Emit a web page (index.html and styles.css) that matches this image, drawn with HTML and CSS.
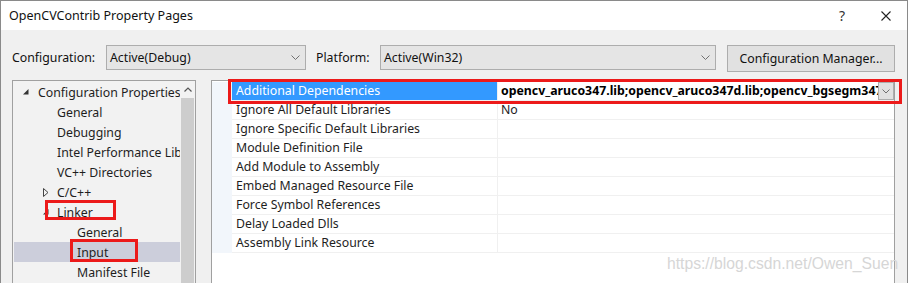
FILE: index.html
```html
<!DOCTYPE html>
<html lang="en">
<head>
    <meta charset="UTF-8">
    <title>OpenCVContrib Property Pages</title>
    <link rel="stylesheet" href="styles.css">
</head>
<body>
    <div class="window">
        <div class="titlebar">
            <span class="title">OpenCVContrib Property Pages</span>
            <span class="help">?</span>
            <svg class="close" width="10" height="10" viewBox="0 0 10 10">
                <path d="M0.5 0.5 L9.5 9.5 M9.5 0.5 L0.5 9.5" stroke="#222" stroke-width="1.1" fill="none"/>
            </svg>
        </div>

        <div class="toolbar">
            <label class="tb-label label-config">Configuration:</label>
            <div class="combo combo-config">
                <span>Active(Debug)</span>
                <svg width="9" height="5" viewBox="0 0 9 5"><path d="M0.5 0.5 L4.5 4.5 L8.5 0.5" stroke="#707070" fill="none"/></svg>
            </div>
            <label class="tb-label label-platform">Platform:</label>
            <div class="combo combo-platform">
                <span>Active(Win32)</span>
                <svg width="9" height="5" viewBox="0 0 9 5"><path d="M0.5 0.5 L4.5 4.5 L8.5 0.5" stroke="#707070" fill="none"/></svg>
            </div>
            <button class="btn">Configuration Manager...</button>
        </div>

        <div class="main">
            <div class="tree">
                <ul class="tree-list">
                    <li class="node lvl0">
                        <span class="tog"><svg width="6" height="6" viewBox="0 0 6 6"><path d="M5.5 0 L5.5 5.5 L0 5.5 Z" fill="#333"/></svg></span>
                        <span class="text">Configuration Properties</span>
                    </li>
                    <li class="node lvl1"><span class="tog"></span><span class="text">General</span></li>
                    <li class="node lvl1"><span class="tog"></span><span class="text">Debugging</span></li>
                    <li class="node lvl1"><span class="tog"></span><span class="text">Intel Performance Libraries</span></li>
                    <li class="node lvl1"><span class="tog"></span><span class="text">VC++ Directories</span></li>
                    <li class="node lvl1">
                        <span class="tog"><svg width="6" height="9" viewBox="0 0 6 9"><path d="M0.5 0.5 L5 4.5 L0.5 8.5 Z" fill="none" stroke="#444"/></svg></span>
                        <span class="text">C/C++</span>
                    </li>
                    <li class="node lvl1">
                        <span class="tog"><svg width="6" height="6" viewBox="0 0 6 6"><path d="M5.5 0 L5.5 5.5 L0 5.5 Z" fill="#333"/></svg></span>
                        <span class="text">Linker</span>
                    </li>
                    <li class="node lvl2"><span class="text">General</span></li>
                    <li class="node lvl2 selected"><span class="text">Input</span></li>
                    <li class="node lvl2"><span class="text">Manifest File</span></li>
                </ul>
                <div class="scrollbar">
                    <div class="scroll-up">
                        <svg width="8" height="5" viewBox="0 0 8 5"><path d="M0.5 4.5 L4 1 L7.5 4.5" stroke="#555" stroke-width="1.2" fill="none"/></svg>
                    </div>
                    <div class="thumb"></div>
                </div>
                <div class="mark mark-linker"></div>
                <div class="mark mark-input"></div>
            </div>

            <div class="grid">
                <div class="row selected">
                    <div class="gutter"></div>
                    <div class="name">Additional Dependencies</div>
                    <div class="value">
                        <span class="value-text">opencv_aruco347.lib;opencv_aruco347d.lib;opencv_bgsegm347.lib;opencv_bgsegm347d.lib</span>
                        <span class="drop">
                            <svg width="8" height="5" viewBox="0 0 8 5"><path d="M0.5 0.5 L4 4 L7.5 0.5" stroke="#707070" fill="none"/></svg>
                        </span>
                    </div>
                </div>
                <div class="row">
                    <div class="gutter"></div>
                    <div class="name">Ignore All Default Libraries</div>
                    <div class="value plain">No</div>
                </div>
                <div class="row">
                    <div class="gutter"></div>
                    <div class="name">Ignore Specific Default Libraries</div>
                    <div class="value"></div>
                </div>
                <div class="row">
                    <div class="gutter"></div>
                    <div class="name">Module Definition File</div>
                    <div class="value"></div>
                </div>
                <div class="row">
                    <div class="gutter"></div>
                    <div class="name">Add Module to Assembly</div>
                    <div class="value"></div>
                </div>
                <div class="row">
                    <div class="gutter"></div>
                    <div class="name">Embed Managed Resource File</div>
                    <div class="value"></div>
                </div>
                <div class="row">
                    <div class="gutter"></div>
                    <div class="name">Force Symbol References</div>
                    <div class="value"></div>
                </div>
                <div class="row">
                    <div class="gutter"></div>
                    <div class="name">Delay Loaded Dlls</div>
                    <div class="value"></div>
                </div>
                <div class="row">
                    <div class="gutter"></div>
                    <div class="name">Assembly Link Resource</div>
                    <div class="value"></div>
                </div>
            </div>

            <div class="mark mark-deps"></div>
            <div class="watermark">https://blog.csdn.net/Owen_Suen</div>
        </div>
    </div>
</body>
</html>
```

FILE: styles.css
```css
* {
    box-sizing: border-box;
}
body {
    margin: 0;
    font-family: "Noto Sans", "Segoe UI", sans-serif;
    font-size: 12.3px;
    color: #1e1e1e;
    background: #fff;
}
.window {
    width: 908px;
    height: 283px;
    overflow: hidden;
    border: 1px solid #8a8a8a;
    border-bottom: none;
    background-color: #f0f0f0;
    display: flex;
    flex-direction: column;
}
.titlebar {
    height: 29px;
    flex-shrink: 0;
    background-color: white;
    display: flex;
    align-items: center;
    padding-left: 8px;
}
.title {
    flex: 1;
    font-size: 12.5px;
    color: #111;
}
.help {
    font-size: 14px;
    color: #333;
    margin-right: 36px;
}
.close {
    margin-right: 16px;
}

/* configuration / platform bar */
.toolbar {
    height: 50px;
    flex-shrink: 0;
    display: flex;
    align-items: flex-start;
    padding: 15px 0 0 11px;
}
.tb-label {
    line-height: 25px;
    color: #111;
}
.label-config {
    width: 94px;
}
.label-platform {
    width: 64px;
    margin-left: 10px;
}
.combo {
    height: 25px;
    border: 1px solid #adadad;
    background-color: #e5e5e5;
    display: flex;
    align-items: center;
    justify-content: space-between;
    padding: 0 5px 0 3px;
    color: #111;
}
.combo-config {
    width: 200px;
}
.combo-platform {
    width: 336px;
}
.btn {
    margin-left: 11px;
    width: 168px;
    height: 27px;
    border: 1px solid #adadad;
    background-color: #e1e1e1;
    font-family: inherit;
    font-size: 12.3px;
    color: #111;
    padding: 0;
}

.main {
    flex: 1;
    display: flex;
    position: relative;
    padding-left: 11px;
}

/* left tree */
.tree {
    width: 184px;
    margin-right: 15px;
    border: 1px solid #a0a0a0;
    border-bottom: none;
    background-color: #f2f2f2;
    display: flex;
    position: relative;
}
.tree-list {
    list-style: none;
    margin: 0;
    padding: 1px 0 0 1px;
    width: 167px;
    overflow: hidden;
}
.node {
    height: 20px;
    display: flex;
    align-items: center;
    white-space: nowrap;
}
.node.lvl0 {
    padding-left: 9px;
}
.node.lvl1 {
    padding-left: 29px;
}
.node.lvl2 {
    padding-left: 63px;
}
.tog {
    width: 15px;
    flex-shrink: 0;
    display: flex;
    align-items: center;
}
.lvl1 .tog {
    width: 14px;
}
.node.selected {
    background-color: #cccedb;
}
.scrollbar {
    width: 15px;
    display: flex;
    flex-direction: column;
}
.scroll-up {
    height: 17px;
    display: flex;
    align-items: center;
    justify-content: center;
}
.thumb {
    flex: 1;
    margin: 0 1px;
    background-color: #cdcdcd;
}

/* red annotation frames */
.mark {
    position: absolute;
    border: 3px solid #ec1a1a;
}
.mark-linker {
    left: 32px;
    top: 119px;
    width: 71px;
    height: 20px;
}
.mark-input {
    left: 57px;
    top: 158px;
    width: 68px;
    height: 23px;
}
.mark-deps {
    left: 227px;
    top: -1px;
    width: 674px;
    height: 25px;
}

/* property grid */
.grid {
    width: 684px;
    border: 1px solid #a0a0a0;
    border-bottom: none;
    background-color: white;
    padding-top: 1px;
}
.row {
    height: 19px;
    display: flex;
}
.gutter {
    width: 20px;
    background-color: #f2f6fb;
}
.name {
    width: 266px;
    padding-left: 4px;
    border-right: 1px solid #f0f0f0;
    border-bottom: 1px solid #f0f0f0;
    line-height: 18px;
    white-space: nowrap;
    overflow: hidden;
}
.value {
    flex: 1;
    min-width: 0;
    display: flex;
    padding-left: 3px;
    border-bottom: 1px solid #f0f0f0;
    line-height: 18px;
    font-weight: bold;
    color: #000;
}
.value.plain {
    font-weight: normal;
    color: #1e1e1e;
}
.value-text {
    flex: 1;
    overflow: hidden;
    white-space: nowrap;
}
.drop {
    width: 16px;
    height: 18px;
    flex-shrink: 0;
    border: 1px solid #adadad;
    background-color: #e1e1e1;
    display: flex;
    align-items: center;
    justify-content: center;
}
.row.selected .name {
    background-color: #3399ff;
    color: white;
}

.watermark {
    position: absolute;
    left: 666px;
    top: 175px;
    font-family: "Liberation Sans", Arial, sans-serif;
    font-size: 15.7px;
    color: #d6d6d6;
    pointer-events: none;
}
```
